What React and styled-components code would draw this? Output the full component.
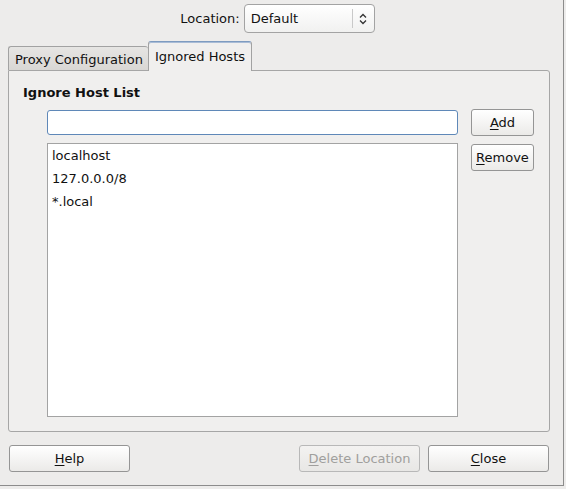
import styled, { createGlobalStyle } from "styled-components";

const GlobalStyle = createGlobalStyle`
  html, body {
    margin: 0;
    padding: 0;
    background: #edeceb;
  }
  body {
    font-family: "DejaVu Sans", "Liberation Sans", sans-serif;
    font-size: 13px;
    color: #111;
  }
`;

const hosts = ["localhost", "127.0.0.0/8", "*.local"];

const Mnemonic = ({ text, at = 0 }) => (
  <>
    {text.slice(0, at)}
    <u>{text[at]}</u>
    {text.slice(at + 1)}
  </>
);

const Chevrons = () => (
  <svg width="10" height="14" viewBox="0 0 10 14">
    <path
      d="M2 5.5 L5 2.5 L8 5.5 M2 8.5 L5 11.5 L8 8.5"
      fill="none"
      stroke="#333"
      strokeWidth="1.3"
    />
  </svg>
);

const App = () => {
  return (
    <>
      <GlobalStyle />
      <Window>
        <LocationRow>
          <Label>Location:</Label>
          <Combo>
            <ComboText>Default</ComboText>
            <ComboArrow>
              <Chevrons />
            </ComboArrow>
          </Combo>
        </LocationRow>

        <Tabs>
          <Tab>Proxy Configuration</Tab>
          <Tab active>Ignored Hosts</Tab>
        </Tabs>

        <Panel>
          <Heading>Ignore Host List</Heading>
          <Body>
            <Column>
              <Entry />
              <List>
                {hosts.map((host) => (
                  <Item key={host}>{host}</Item>
                ))}
              </List>
            </Column>
            <Side>
              <Button small>
                <Mnemonic text="Add" />
              </Button>
              <Button small>
                <Mnemonic text="Remove" />
              </Button>
            </Side>
          </Body>
        </Panel>

        <Footer>
          <Button>
            <Mnemonic text="Help" />
          </Button>
          <Spacer />
          <Button disabled>
            <Mnemonic text="Delete Location" />
          </Button>
          <Button>
            <Mnemonic text="Close" />
          </Button>
        </Footer>
      </Window>
    </>
  );
};

const Window = styled.div`
  width: 564px;
  height: 486px;
  border-right: 1px solid #8c8c8c;
  border-bottom: 1px solid #8c8c8c;
  display: flex;
  flex-direction: column;
  box-sizing: border-box;
`;

const LocationRow = styled.div`
  display: flex;
  align-items: center;
  justify-content: center;
  gap: 4px;
  height: 29px;
  margin-top: 4px;
  padding-right: 8px;
`;

const Label = styled.span`
  color: #111;
`;

const Combo = styled.div`
  width: 131px;
  height: 29px;
  box-sizing: border-box;
  border: 1px solid #a3a3a3;
  border-radius: 4px;
  background: linear-gradient(#ffffff, #f1f1f0);
  display: flex;
  align-items: center;
`;

const ComboText = styled.span`
  flex: 1;
  padding-left: 6px;
`;

const ComboArrow = styled.div`
  width: 21px;
  height: 19px;
  border-left: 1px solid #c9c9c9;
  display: flex;
  align-items: center;
  justify-content: center;
`;

const Tabs = styled.div`
  display: flex;
  align-items: flex-end;
  margin: 8px 0 0 8px;
  height: 29px;
  position: relative;
  z-index: 1;
`;

const Tab = styled.div`
  box-sizing: border-box;
  height: ${(p) => (p.active ? "30px" : "24px")};
  padding: ${(p) => (p.active ? "0 6px" : "2px 5px 0 6px")};
  margin-bottom: ${(p) => (p.active ? "-1px" : "0")};
  display: flex;
  align-items: center;
  border: 1px solid #a2a2a2;
  border-bottom: none;
  border-top: 1px solid ${(p) => (p.active ? "#7e9bc0" : "#a2a2a2")};
  border-right: ${(p) => (p.active ? "1px solid #a2a2a2" : "none")};
  border-radius: 3px 3px 0 0;
  background: ${(p) =>
    p.active ? "#f0efee" : "linear-gradient(#e6e5e3, #d9d7d4)"};
  box-shadow: ${(p) => (p.active ? "inset 0 1px 0 #a9bcd6" : "none")};
`;

const Panel = styled.div`
  margin-left: 8px;
  width: 542px;
  height: 362px;
  box-sizing: border-box;
  border: 1px solid #a6a6a6;
  border-radius: 0 3px 3px 3px;
  background: #f0efee;
  padding: 13px 0 0 14px;
  display: flex;
  flex-direction: column;
`;

const Heading = styled.div`
  font-weight: bold;
  height: 18px;
  line-height: 18px;
`;

const Body = styled.div`
  display: flex;
  gap: 13px;
  margin-top: 8px;
  padding-left: 24px;
`;

const Column = styled.div`
  display: flex;
  flex-direction: column;
  gap: 8px;
`;

const Entry = styled.div`
  width: 411px;
  height: 25px;
  box-sizing: border-box;
  border: 1px solid #5f88b8;
  border-radius: 3px;
  background: #fff;
`;

const List = styled.div`
  width: 411px;
  height: 274px;
  box-sizing: border-box;
  border: 1px solid #a3a3a3;
  background: #fff;
  padding: 0 0 0 4px;
`;

const Item = styled.div`
  height: 23px;
  line-height: 23px;
`;

const Side = styled.div`
  display: flex;
  flex-direction: column;
  gap: 8px;
  margin-top: -1px;
`;

const Button = styled.button`
  font: inherit;
  color: ${(p) => (p.disabled ? "#a09f9d" : "#111")};
  width: ${(p) => (p.small ? "63px" : "121px")};
  height: 27px;
  box-sizing: border-box;
  border: 1px solid ${(p) => (p.disabled ? "#b8b8b8" : "#959595")};
  border-radius: 3px;
  background: ${(p) =>
    p.disabled
      ? "linear-gradient(#f3f2f1, #e8e7e5)"
      : "linear-gradient(#ffffff, #ebeae8)"};
  padding: 0;
  u {
    text-underline-offset: 2px;
  }
`;

const Footer = styled.div`
  display: flex;
  gap: 8px;
  margin-top: 13px;
  padding: 0 14px 0 9px;
`;

const Spacer = styled.div`
  flex: 1;
`;

export default App;
